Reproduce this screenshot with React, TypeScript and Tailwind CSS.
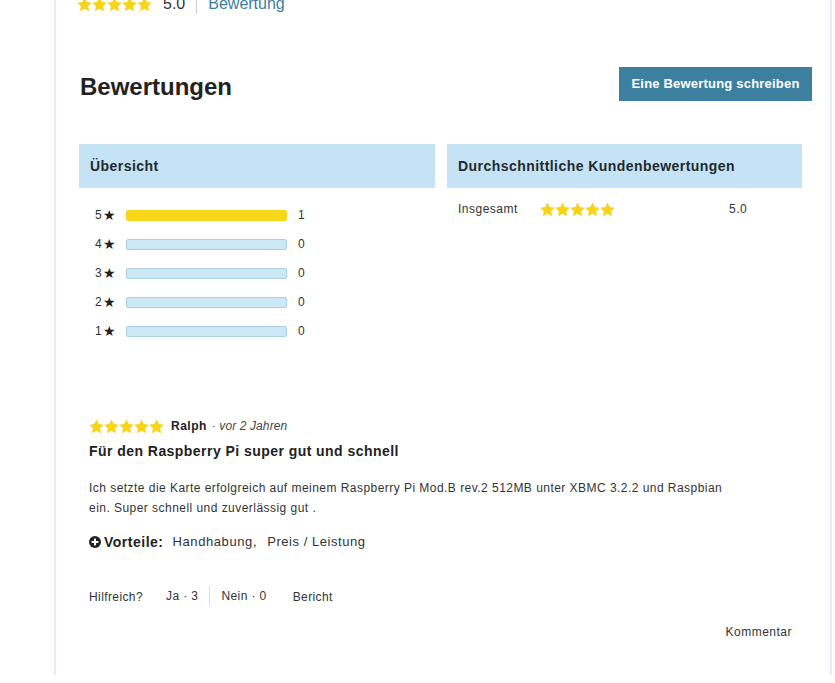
import React from "react";

const Star = ({ size = 15, color = "#f7d417" }: { size?: number; color?: string }) => (
  <svg width={size} height={size} viewBox="0 0 24 24" className="block">
    <path
      d="M12 0.6l3.6 7.4 8.1 1-5.9 5.6 1.5 8.1L12 18.8l-7.3 3.9 1.5-8.1L0.3 9l8.1-1z"
      fill={color}
    />
  </svg>
);

const Stars = ({ size = 15 }: { size?: number }) => (
  <div className="flex">
    {[0, 1, 2, 3, 4].map((i) => (
      <Star key={i} size={size} />
    ))}
  </div>
);

const bars = [
  { n: 5, c: 1 },
  { n: 4, c: 0 },
  { n: 3, c: 0 },
  { n: 2, c: 0 },
  { n: 1, c: 0 },
];

export default function App() {
  return (
    <div
      className="w-[835px] h-[683px] overflow-hidden bg-white text-[#222]"
      style={{ fontFamily: '"Liberation Sans", Arial, sans-serif' }}
    >
      <div className="ml-[54px] w-[778px] h-[683px] border-x-2 border-[#dcedf6] pl-[23px] pr-[18px]">
        {/* top rating row */}
        <div className="flex items-center h-[24px] -mt-[8px] -ml-[2px]">
          <Stars size={15} />
          <span className="ml-[11px] text-[16px] text-[#333]">5.0</span>
          <span className="ml-[11px] w-px h-[20px] bg-[#ccc]" />
          <span className="ml-[11px] text-[16px] text-[#3b7ea1]">Bewertung</span>
        </div>

        {/* heading row */}
        <div className="flex items-center justify-between mt-[51px] h-[34px]">
          <h2 className="ml-[1px] mt-[6px] text-[24px] font-semibold text-[#222]">Bewertungen</h2>
          <button className="h-[34px] w-[193px] bg-[#3c7f9e] text-white text-[13px] font-bold tracking-[0.2px]">
            Eine Bewertung schreiben
          </button>
        </div>

        {/* panels */}
        <div className="mt-[43px] grid grid-cols-[356px_355px] gap-[12px] w-[723px]">
          <div>
            <div className="h-[44px] bg-[#c5e3f4] flex items-center pl-[11px] text-[14px] font-bold text-[#1f2a30] tracking-[0.45px]">
              Übersicht
            </div>
            <div className="pt-[17px] flex flex-col gap-[9px]">
              {bars.map((b) => (
                <div key={b.n} className="flex items-center h-[20px] text-[12px] text-[#333]">
                  <span className="ml-[16px] w-[8px]">{b.n}</span>
                  <span className="text-[14px] leading-none text-[#222]">★</span>
                  <div
                    className={
                      b.c > 0
                        ? "ml-[10px] w-[161px] h-[11px] rounded-[2px] bg-[#f8d71a]"
                        : "ml-[10px] w-[161px] h-[11px] rounded-[2px] bg-[#cce8f6] border border-[#abd0e2]"
                    }
                  />
                  <span className="ml-[11px]">{b.c}</span>
                </div>
              ))}
            </div>
          </div>
          <div>
            <div className="h-[44px] bg-[#c5e3f4] flex items-center pl-[11px] text-[14px] font-bold text-[#1f2a30] tracking-[0.45px]">
              Durchschnittliche Kundenbewertungen
            </div>
            <div className="flex items-center h-[20px] mt-[11px] text-[12px] text-[#333] tracking-[0.5px]">
              <span className="ml-[11px] w-[82px]">Insgesamt</span>
              <Stars size={15} />
              <span className="ml-[114px]">5.0</span>
            </div>
          </div>
        </div>

        {/* review */}
        <div className="pl-[10px] mt-[76px]">
          <div className="flex items-center h-[18px]">
            <Stars size={15} />
            <span className="ml-[7px] text-[12px] font-bold text-[#222] tracking-[0.5px]">Ralph</span>
            <span className="ml-[5px] text-[12px] italic text-[#444] tracking-[0.1px]">· vor 2 Jahren</span>
          </div>
          <div className="mt-[6px] text-[14px] font-bold text-[#222] tracking-[0.45px]">
            Für den Raspberry Pi super gut und schnell
          </div>
          <p className="mt-[16px] w-[640px] text-[12px] leading-[20px] text-[#333] tracking-[0.46px]">
            Ich setzte die Karte erfolgreich auf meinem Raspberry Pi Mod.B rev.2 512MB unter XBMC 3.2.2 und Raspbian ein. Super schnell und zuverlässig gut .
          </p>
          <div className="mt-[14px] flex items-center h-[20px] text-[13px] text-[#333]">
            <svg width="12" height="12" viewBox="0 0 12 12" className="mr-[3px]">
              <circle cx="6" cy="6" r="6" fill="#222" />
              <rect x="2.6" y="5" width="6.8" height="2" fill="#fff" />
              <rect x="5" y="2.6" width="2" height="6.8" fill="#fff" />
            </svg>
            <span className="text-[14px] font-bold text-[#222] tracking-[0.5px]">Vorteile:</span>
            <span className="ml-[9px] tracking-[0.6px]">Handhabung,</span>
            <span className="ml-[10px] tracking-[0.55px]">Preis / Leistung</span>
          </div>
          <div className="mt-[34px] flex items-center h-[20px] text-[12px] text-[#333] tracking-[0.4px]">
            <span className="mt-[2px]">Hilfreich?</span>
            <span className="ml-[23px]">Ja · 3</span>
            <span className="ml-[11px] w-px h-[20px] bg-[#ddd]" />
            <span className="ml-[11px]">Nein · 0</span>
            <span className="ml-[26px] mt-[2px]">Bericht</span>
          </div>
          <div className="mt-[17px] flex justify-end w-[703px] text-[12px] text-[#333] tracking-[0.5px]">
            Kommentar
          </div>
        </div>
      </div>
    </div>
  );
}
